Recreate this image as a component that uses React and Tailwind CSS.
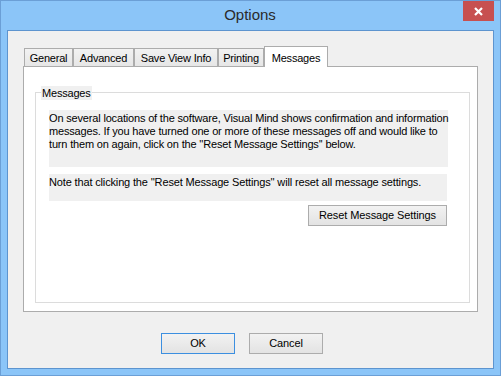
import React from 'react'

const font = { fontFamily: '"Liberation Sans", Arial, sans-serif' }

const tabs = [
    { label: 'General', w: 'w-[49px]' },
    { label: 'Advanced', w: 'w-[61px]' },
    { label: 'Save View Info', w: 'w-[84px]' },
    { label: 'Printing', w: 'w-[46px]' },
]

const WinButton = ({ children, className = '' }) => (
    <button
        className={`flex items-center justify-center bg-linear-to-b from-[#f2f2f2] to-[#e3e3e3] border text-[11px] text-black tracking-[-0.1px] ${className}`}
    >
        {children}
    </button>
)

const App = () => {
    return (
        <div
            className="w-[501px] h-[376px] bg-[#8bc5f8] border border-[#6b9fd6] flex flex-col px-[6px] pb-[6px]"
            style={font}
        >
            {/* Title bar */}
            <div className="h-[29px] flex items-start">
                <div className="flex-1 h-full flex items-center justify-center pl-[30px] text-[15px] text-[#2a2a2a] pb-[1px]">
                    Options
                </div>
                <div className="w-[31px] h-[20px] bg-[#c75050] flex items-center justify-center">
                    <svg width="9" height="9" viewBox="0 0 9 9">
                        <path d="M1 1 L8 8 M8 1 L1 8" stroke="#fff" strokeWidth="2.2" />
                    </svg>
                </div>
            </div>

            {/* Client area */}
            <div className="flex-1 bg-[#f0f0f0] border border-[#5d94cf] flex flex-col px-[15px] pt-[14px]">
                {/* Tabs */}
                <div className="flex items-end h-[21px] pl-[1px] text-[11px] tracking-[-0.2px] text-black">
                    {tabs.map(t => (
                        <div
                            key={t.label}
                            className={`${t.w} h-[18px] border border-b-0 border-[#acacac] bg-linear-to-b from-[#f2f2f2] to-[#e6e6e6] flex items-center justify-center pt-[1px] whitespace-nowrap`}
                        >
                            {t.label}
                        </div>
                    ))}
                    <div className="w-[64px] h-[21px] border border-b-0 border-[#acacac] bg-white flex items-start justify-center pt-[3px] relative z-10 -mb-px">
                        Messages
                    </div>
                </div>

                {/* Tab panel */}
                <div className="h-[246px] w-[455px] border border-[#acacac] bg-white pl-[11px] pr-[7px] pt-[25px] pb-[8px] flex">
                    <div className="relative flex-1 border border-[#dcdcdc] pl-[13px] pt-[17px]">
                        <div className="absolute left-[5px] -top-[7px] bg-[#f0f0f0] text-[11px] leading-[14px] px-[1px] tracking-[-0.2px]">
                            Messages
                        </div>
                        <div className="w-[399px] h-[57px] bg-[#f0f0f0] text-[11px] leading-[13px] pt-[2px] whitespace-nowrap tracking-[-0.17px]">
                            On several locations of the software, Visual Mind shows confirmation and information
                            <br />
                            messages. If you have turned one or more of these messages off and would like to
                            <br />
                            turn them on again, click on the ''Reset Message Settings'' below.
                        </div>
                        <div className="mt-[7px] w-[398px] h-[27px] bg-[#f0f0f0] text-[11px] leading-[13px] pt-[2px] whitespace-nowrap tracking-[-0.15px]">
                            Note that clicking the ''Reset Message Settings'' will reset all message settings.
                        </div>
                        <div className="flex w-[398px] justify-end mt-[4px]">
                            <WinButton className="w-[139px] h-[21px] border-[#acacac]">
                                Reset Message Settings
                            </WinButton>
                        </div>
                    </div>
                </div>

                {/* Dialog buttons */}
                <div className="flex pl-[138px] gap-[14px] mt-[21px]">
                    <WinButton className="w-[74px] h-[21px] border-[#3c8fe0]">OK</WinButton>
                    <WinButton className="w-[74px] h-[21px] border-[#acacac]">Cancel</WinButton>
                </div>
            </div>
        </div>
    )
}

export default App
